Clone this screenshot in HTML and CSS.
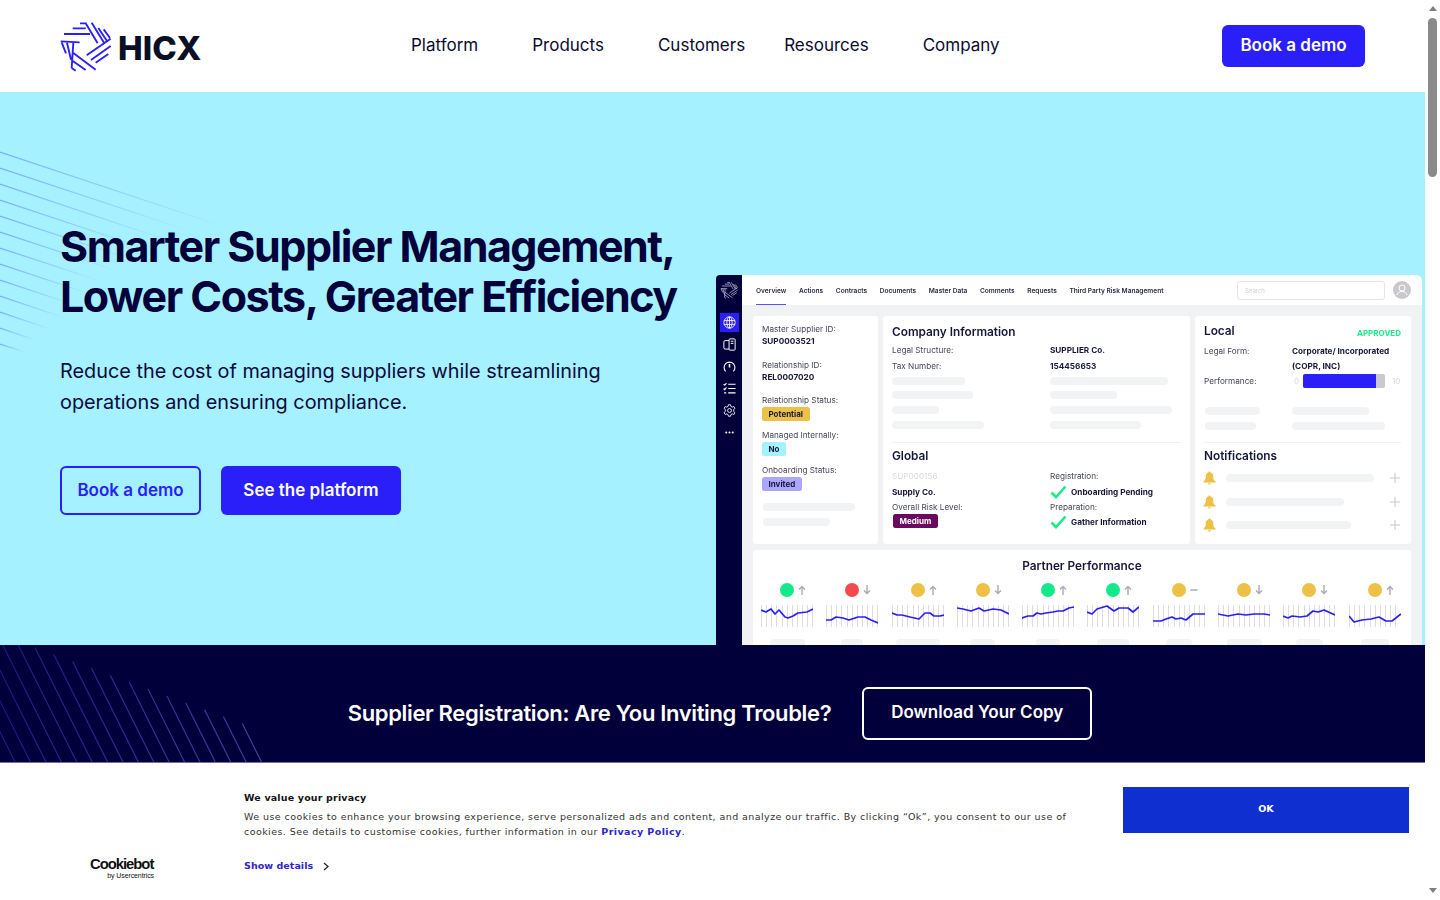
FILE: index.html
```html
<!DOCTYPE html>
<html lang="en">
<head>
    <meta charset="UTF-8">
    <meta name="viewport" content="width=device-width, initial-scale=1.0">
    <title>HICX - Smarter Supplier Management</title>
    <link rel="stylesheet" href="styles.css">
</head>
<body>
    <svg class="icon-defs" width="0" height="0">
        <defs>
            <symbol id="logo-mark" viewBox="0 0 180 168">
                <path fill="none" stroke="currentColor" stroke-width="5.6" d="M75 16H95M53 31H92M27 48H105M92 16L128 76M110 14L148 76M130 30L158 72M146 34L165 60M167 62L95 112M167 84L108 126M160 108L122 134M55 105L122 155M50 127L92 156M50 150L62 158M17 70L74 73M20 73L33 106M36 74L48 125M55 74L50 150"/>
            </symbol>
            <symbol id="arrow-up" viewBox="0 0 8 10">
                <path d="M4 10V1.5M1 4.5L4 1.5L7 4.5" fill="none" stroke="currentColor" stroke-width="1.4"/>
            </symbol>
            <symbol id="arrow-down" viewBox="0 0 8 10">
                <path d="M4 0V8.5M1 5.5L4 8.5L7 5.5" fill="none" stroke="currentColor" stroke-width="1.4"/>
            </symbol>
            <symbol id="arrow-flat" viewBox="0 0 8 10">
                <path d="M0.5 5H7.5" fill="none" stroke="currentColor" stroke-width="1.4"/>
            </symbol>
            <symbol id="check" viewBox="0 0 17 14">
                <path d="M1.5 7.5L6 12L15.5 1.5" fill="none" stroke="currentColor" stroke-width="2.6"/>
            </symbol>
            <symbol id="bell" viewBox="0 0 13 14">
                <path d="M6.5 0.5C7.2 0.5 7.6 1 7.6 1.6C9.5 2.2 10.3 3.8 10.3 6C10.3 8.2 11 9.4 12.5 10.6V11.4H0.5V10.6C2 9.4 2.7 8.2 2.7 6C2.7 3.8 3.5 2.2 5.4 1.6C5.4 1 5.8 0.5 6.5 0.5ZM5 12.2H8C8 13 7.3 13.6 6.5 13.6C5.7 13.6 5 13 5 12.2Z" fill="currentColor"/>
            </symbol>
            <symbol id="plus" viewBox="0 0 10 10">
                <path d="M5 0V10M0 5H10" fill="none" stroke="currentColor" stroke-width="1"/>
            </symbol>
        </defs>
    </svg>

    <div class="page">
        <header class="site-header">
            <a class="logo" href="#">
                <svg class="logo-mark"><use href="#logo-mark"/></svg>
                <span class="logo-text">HICX</span>
            </a>
            <nav class="main-nav">
                <a href="#">Platform</a>
                <a href="#">Products</a>
                <a class="nav-short" href="#">Customers</a>
                <a href="#">Resources</a>
                <a href="#">Company</a>
            </nav>
            <a class="btn btn-header" href="#">Book a demo</a>
        </header>

        <section class="hero">
            <svg class="hero-lines" width="300" height="260" viewBox="0 0 300 260">
                <defs>
                    <linearGradient id="hero-fade" gradientUnits="objectBoundingBox" x1="0" y1="0" x2="1" y2="0">
                        <stop offset="0" stop-color="#5f7de8" stop-opacity="0.6"/>
                        <stop offset="1" stop-color="#5f7de8" stop-opacity="0"/>
                    </linearGradient>
                </defs>
                <g fill="none" stroke="url(#hero-fade)" stroke-width="1.2">
                    <path d="M0 60L225 135"/>
                    <path d="M0 76L190 139"/>
                    <path d="M0 92L170 149"/>
                    <path d="M0 108L150 158"/>
                    <path d="M0 124L130 167"/>
                    <path d="M0 140L115 178"/>
                    <path d="M0 156L100 189"/>
                    <path d="M0 172L90 202"/>
                    <path d="M0 188L75 213"/>
                    <path d="M0 204L65 226"/>
                    <path d="M0 220L50 237"/>
                    <path d="M0 236L35 248"/>
                    <path d="M0 252L25 260"/>
                </g>
            </svg>

            <div class="hero-text">
                <h1>Smarter Supplier Management, Lower Costs, Greater Efficiency</h1>
                <p>Reduce the cost of managing suppliers while streamlining operations and ensuring compliance.</p>
                <div class="hero-actions">
                    <a class="btn btn-outline" href="#">Book a demo</a>
                    <a class="btn btn-solid" href="#">See the platform</a>
                </div>
            </div>

            <div class="mock">
                <aside class="mock-side">
                    <svg class="mock-logo"><use href="#logo-mark"/></svg>
                    <div class="side-icon side-active">
                        <svg viewBox="0 0 12 12" fill="none" stroke="currentColor" stroke-width="0.8"><circle cx="6" cy="6" r="5.2"/><ellipse cx="6" cy="6" rx="2.4" ry="5.2"/><path d="M1 4.2H11M1 7.8H11M6 0.8V11.2"/></svg>
                    </div>
                    <div class="side-icon">
                        <svg viewBox="0 0 12 12" fill="none" stroke="currentColor" stroke-width="0.9"><rect x="5.6" y="0.8" width="5.6" height="10.4" rx="0.8"/><path d="M5.6 2.4H2C1.2 2.4 0.8 2.8 0.8 3.6V9C0.8 9.8 1.2 10.2 2 10.2H5.6M7.2 3H9.6M7.2 5H9.6"/></svg>
                    </div>
                    <div class="side-icon">
                        <svg viewBox="0 0 12 12" fill="none" stroke="currentColor" stroke-width="1"><path d="M2.4 10.4A5 5 0 1 1 9.6 10.4"/><path d="M6 3.6V7" stroke-width="1.4"/></svg>
                    </div>
                    <div class="side-icon">
                        <svg viewBox="0 0 12 12" fill="none" stroke="currentColor" stroke-width="1"><path d="M4.8 2H11.6M4.8 6H11.6M4.8 10H11.6M0.6 2L1.6 3L3.2 1M0.6 6L1.6 7L3.2 5M1 10H3"/></svg>
                    </div>
                    <div class="side-icon">
                        <svg viewBox="0 0 12 12" fill="none" stroke="currentColor" stroke-width="0.8"><circle cx="6" cy="6" r="1.8"/><path d="M5 0.7H7L7.3 2.2L8.6 2.9L10 2.3L11 4L9.9 5V7L11 8L10 9.7L8.6 9.1L7.3 9.8L7 11.3H5L4.7 9.8L3.4 9.1L2 9.7L1 8L2.1 7V5L1 4L2 2.3L3.4 2.9L4.7 2.2Z"/></svg>
                    </div>
                    <div class="side-icon">
                        <svg viewBox="0 0 12 12" fill="currentColor"><circle cx="3" cy="6" r="0.9"/><circle cx="6" cy="6" r="0.9"/><circle cx="9" cy="6" r="0.9"/></svg>
                    </div>
                </aside>

                <div class="mock-main">
                    <div class="mock-top">
                        <div class="mock-tabs">
                            <span class="tab-active">Overview</span>
                            <span>Actions</span>
                            <span>Contracts</span>
                            <span>Documents</span>
                            <span>Master Data</span>
                            <span>Comments</span>
                            <span>Requests</span>
                            <span>Third Party Risk Management</span>
                        </div>
                        <div class="mock-search">Search</div>
                        <div class="mock-avatar">
                            <svg viewBox="0 0 18 18" fill="none" stroke="#fff" stroke-width="1"><circle cx="9" cy="7" r="3"/><path d="M4 14C4.5 11.5 6.5 10.5 9 10.5C11.5 10.5 13.5 11.5 14 14"/></svg>
                        </div>
                    </div>

                    <div class="mock-content">
                        <div class="card card-ids">
                            <div class="label">Master Supplier ID:</div>
                            <div class="value">SUP0003521</div>
                            <div class="label label-gap">Relationship ID:</div>
                            <div class="value">REL0007020</div>
                            <div class="label label-gap-sm">Relationship Status:</div>
                            <span class="badge badge-yellow">Potential</span>
                            <div class="label label-gap-xs">Managed Internally:</div>
                            <span class="badge badge-blue">No</span>
                            <div class="label label-gap-xs">Onboarding Status:</div>
                            <span class="badge badge-violet">Invited</span>
                            <div class="skeleton sk-ids-1"></div>
                            <div class="skeleton sk-ids-2"></div>
                        </div>

                        <div class="card card-company">
                            <h3>Company Information</h3>
                            <div class="info-grid">
                                <div class="label">Legal Structure:</div>
                                <div class="value">SUPPLIER Co.</div>
                                <div class="label">Tax Number:</div>
                                <div class="value">154456653</div>
                            </div>
                            <div class="skeleton-grid">
                                <div class="skeleton" style="width: 73px"></div>
                                <div class="skeleton" style="width: 118px"></div>
                                <div class="skeleton" style="width: 81px"></div>
                                <div class="skeleton" style="width: 67px"></div>
                                <div class="skeleton" style="width: 47px"></div>
                                <div class="skeleton" style="width: 122px"></div>
                                <div class="skeleton" style="width: 92px"></div>
                                <div class="skeleton" style="width: 91px"></div>
                            </div>
                            <div class="divider"></div>
                            <h3>Global</h3>
                            <div class="global-grid">
                                <div>
                                    <div class="label label-pale">SUP000156</div>
                                    <div class="value">Supply Co.</div>
                                    <div class="label">Overall Risk Level:</div>
                                    <span class="badge badge-purple">Medium</span>
                                </div>
                                <div>
                                    <div class="label">Registration:</div>
                                    <div class="value check-row"><svg class="check"><use href="#check"/></svg>Onboarding Pending</div>
                                    <div class="label">Preparation:</div>
                                    <div class="value check-row"><svg class="check"><use href="#check"/></svg>Gather Information</div>
                                </div>
                            </div>
                        </div>

                        <div class="card card-local">
                            <div class="local-head">
                                <h3>Local</h3>
                                <span class="approved">APPROVED</span>
                            </div>
                            <div class="local-grid">
                                <div class="label">Legal Form:</div>
                                <div class="value">Corporate/ Incorporated<br>(COPR, INC)</div>
                                <div class="label">Performance:</div>
                                <div class="perf">
                                    <span class="perf-end">0</span>
                                    <div class="perf-bar"><div class="perf-fill" style="width: 89%"></div></div>
                                    <span class="perf-end">10</span>
                                </div>
                            </div>
                            <div class="local-skeletons">
                                <div class="skeleton" style="width: 55px"></div>
                                <div class="skeleton" style="width: 77px"></div>
                                <div class="skeleton" style="width: 51px"></div>
                                <div class="skeleton" style="width: 93px"></div>
                            </div>
                            <div class="divider"></div>
                            <h3>Notifications</h3>
                            <div class="notes">
                                <div class="note"><svg class="bell"><use href="#bell"/></svg><div class="skeleton" style="width: 148px"></div><svg class="plus"><use href="#plus"/></svg></div>
                                <div class="note"><svg class="bell"><use href="#bell"/></svg><div class="skeleton" style="width: 118px"></div><svg class="plus"><use href="#plus"/></svg></div>
                                <div class="note"><svg class="bell"><use href="#bell"/></svg><div class="skeleton" style="width: 125px"></div><svg class="plus"><use href="#plus"/></svg></div>
                            </div>
                        </div>

                        <div class="card card-partner">
                            <h3>Partner Performance</h3>
                            <div class="partner-grid">
                                <div class="partner">
                                    <div class="partner-status"><i></i><span class="dot dot-green"></span><svg class="trend"><use href="#arrow-up"/></svg></div>
                                    <svg class="spark" viewBox="0 0 52 22"><polyline points="0,5 5,7 10,4 14,9 18,5 24,12 27,13 32,11 37,8 46,7 52,4"/></svg>
                                    <div class="skeleton" style="width: 35px"></div>
                                </div>
                                <div class="partner">
                                    <div class="partner-status"><i></i><span class="dot dot-red"></span><svg class="trend"><use href="#arrow-down"/></svg></div>
                                    <svg class="spark" viewBox="0 0 52 22"><polyline points="0,15 5,15 10,12 17,13 23,15 32,12 39,12 45,15 52,18"/></svg>
                                    <div class="skeleton" style="width: 22px"></div>
                                </div>
                                <div class="partner">
                                    <div class="partner-status"><i></i><span class="dot dot-yellow"></span><svg class="trend"><use href="#arrow-up"/></svg></div>
                                    <svg class="spark" viewBox="0 0 52 22"><polyline points="0,8 5,10 10,10 18,12 27,14 33,8 38,8 42,11 48,11 52,10"/></svg>
                                    <div class="skeleton" style="width: 44px"></div>
                                </div>
                                <div class="partner">
                                    <div class="partner-status"><i></i><span class="dot dot-yellow"></span><svg class="trend"><use href="#arrow-down"/></svg></div>
                                    <svg class="spark" viewBox="0 0 52 22"><polyline points="0,3 6,4 14,6 22,3 27,6 36,4 44,5 52,9"/></svg>
                                    <div class="skeleton" style="width: 25px"></div>
                                </div>
                                <div class="partner">
                                    <div class="partner-status"><i></i><span class="dot dot-green"></span><svg class="trend"><use href="#arrow-up"/></svg></div>
                                    <svg class="spark" viewBox="0 0 52 22"><polyline points="0,13 6,11 11,11 15,8 19,9 24,8 31,7 36,6 41,6 47,3 52,2"/></svg>
                                    <div class="skeleton" style="width: 24px"></div>
                                </div>
                                <div class="partner">
                                    <div class="partner-status"><i></i><span class="dot dot-green"></span><svg class="trend"><use href="#arrow-up"/></svg></div>
                                    <svg class="spark" viewBox="0 0 52 22"><polyline points="0,7 5,9 10,4 20,1 27,6 32,3 41,3 46,7 52,2"/></svg>
                                    <div class="skeleton" style="width: 32px"></div>
                                </div>
                                <div class="partner">
                                    <div class="partner-status"><i></i><span class="dot dot-yellow"></span><svg class="trend"><use href="#arrow-flat"/></svg></div>
                                    <svg class="spark" viewBox="0 0 52 22"><polyline points="0,16 8,16 13,14 19,12 23,14 28,13 33,15 40,9 52,9"/></svg>
                                    <div class="skeleton" style="width: 26px"></div>
                                </div>
                                <div class="partner">
                                    <div class="partner-status"><i></i><span class="dot dot-yellow"></span><svg class="trend"><use href="#arrow-down"/></svg></div>
                                    <svg class="spark" viewBox="0 0 52 22"><polyline points="0,9 10,11 20,9 28,10 36,9 46,9 52,10"/></svg>
                                    <div class="skeleton" style="width: 35px"></div>
                                </div>
                                <div class="partner">
                                    <div class="partner-status"><i></i><span class="dot dot-yellow"></span><svg class="trend"><use href="#arrow-down"/></svg></div>
                                    <svg class="spark" viewBox="0 0 52 22"><polyline points="0,11 5,13 9,11 17,12 24,11 30,6 35,7 41,5 52,10"/></svg>
                                    <div class="skeleton" style="width: 27px"></div>
                                </div>
                                <div class="partner">
                                    <div class="partner-status"><i></i><span class="dot dot-yellow"></span><svg class="trend"><use href="#arrow-up"/></svg></div>
                                    <svg class="spark" viewBox="0 0 52 22"><polyline points="0,11 5,17 13,15 22,14 30,12 37,16 43,16 52,9"/></svg>
                                    <div class="skeleton" style="width: 28px"></div>
                                </div>
                            </div>
                        </div>
                    </div>
                </div>
            </div>
        </section>

        <section class="banner">
            <svg class="banner-lines" width="280" height="118" viewBox="0 0 280 118">
                <defs>
                    <linearGradient id="banner-fade" gradientUnits="userSpaceOnUse" x1="0" y1="0" x2="262" y2="0">
                        <stop offset="0" stop-color="#1b1988"/>
                        <stop offset="1" stop-color="#45449f"/>
                    </linearGradient>
                </defs>
                <path fill="none" stroke="url(#banner-fade)" stroke-width="1.1" d="M242.3 78.5L262 118M223.4 71.6L246.6 118M204.6 64.7L231.2 118M185.7 57.8L215.8 118M166.9 50.9L200.4 118M148 44L185 118M129.2 37.1L169.6 118M110.3 30.2L154.2 118M91.5 23.3L138.8 118M72.6 16.4L123.4 118M53.8 9.5L108 118M34.9 2.6L92.6 118M18.2 0L77.2 118M2.8 0L61.8 118M-12.6 0L46.4 118M-28 0L31 118M-43.4 0L15.6 118"/>
            </svg>
            <h2>Supplier Registration: Are You Inviting Trouble?</h2>
            <a class="btn btn-ghost" href="#">Download Your Copy</a>
        </section>

        <section class="cookie">
            <div class="cookie-brand">
                <span class="cookie-name">Cookiebot</span>
                <span class="cookie-by">by Usercentrics</span>
            </div>
            <div class="cookie-text">
                <h4>We value your privacy</h4>
                <p>We use cookies to enhance your browsing experience, serve personalized ads and content, and analyze our traffic. By clicking “Ok”, you consent to our use of cookies. See details to customise cookies, further information in our <a href="#">Privacy Policy</a>.</p>
                <a class="cookie-details" href="#">Show details
                    <svg width="6" height="9" viewBox="0 0 6 9" fill="none" stroke="#222" stroke-width="1.2"><path d="M1 1L5 4.5L1 8"/></svg>
                </a>
            </div>
            <button class="cookie-ok">OK</button>
        </section>
    </div>

    <div class="scrollbar">
        <span class="scroll-up"></span>
        <span class="scroll-thumb"></span>
        <span class="scroll-down"></span>
    </div>
</body>
</html>
```

FILE: styles.css
```css
* {
    box-sizing: border-box;
}
body {
    margin: 0;
    height: 900px;
    display: flex;
    overflow: hidden;
    font-family: Inter, "Liberation Sans", sans-serif;
    color: #03003a;
    background: #fff;
}
a {
    text-decoration: none;
    color: inherit;
}
h1, h2, h3, h4, p {
    margin: 0;
}
.icon-defs {
    position: absolute;
}
.page {
    width: 1425px;
    flex: none;
    display: flex;
    flex-direction: column;
}

/* header */
.site-header {
    height: 92px;
    flex: none;
    display: flex;
    align-items: center;
    padding: 0 60px;
    background: #fff;
}
.logo {
    display: flex;
    align-items: center;
    width: 351px;
}
.logo-mark {
    width: 60px;
    height: 56px;
    color: #2a1ff5;
    margin-left: -5px;
    margin-right: 3px;
}
.logo-text {
    font-size: 33px;
    font-weight: 800;
    letter-spacing: 0.1px;
    color: #0b0f26;
    margin-top: 3px;
}
.main-nav {
    display: flex;
    margin-top: -3px;
    font-size: 17px;
    color: #0b0b30;
}
.main-nav a {
    margin-right: 54px;
}
.main-nav .nav-short {
    margin-right: 39px;
}
.btn {
    display: flex;
    align-items: center;
    justify-content: center;
    border-radius: 6px;
    font-size: 17px;
    font-weight: 600;
}
.btn-header {
    width: 143px;
    height: 42px;
    margin-left: auto;
    background: #2a1ff8;
    color: #fff;
    padding-bottom: 3px;
}

/* hero */
.hero {
    position: relative;
    height: 553px;
    flex: none;
    display: flex;
    align-items: flex-start;
    overflow: hidden;
    padding: 129px 0 0 60px;
    background: #a5f1ff;
}
.hero-lines {
    position: absolute;
    left: 0;
    top: 0;
}
.hero-text {
    position: relative;
    width: 656px;
    flex: none;
}
.hero-text h1 {
    font-size: 43px;
    line-height: 50px;
    font-weight: 700;
    letter-spacing: -1.5px;
}
.hero-text p {
    width: 560px;
    margin-top: 34.5px;
    font-size: 19.85px;
    line-height: 31px;
    color: #0a0a3c;
}
.hero-actions {
    display: flex;
    gap: 20px;
    margin-top: 48.5px;
}
.btn-outline {
    width: 141px;
    height: 49px;
    padding-bottom: 1px;
    border: 2px solid #2a1ff8;
    color: #2a1ff8;
}
.btn-solid {
    width: 180px;
    height: 49px;
    padding-bottom: 1px;
    background: #2a1ff8;
    color: #fff;
}

/* product mock */
.mock {
    width: 706px;
    height: 380px;
    flex: none;
    margin-top: 54px;
    display: flex;
    border-radius: 4px 6px 0 0;
    overflow: hidden;
    background: #f1f2f4;
    font-size: 8.2px;
    filter: blur(0.25px);
}
.mock-side {
    width: 26px;
    flex: none;
    display: flex;
    flex-direction: column;
    align-items: center;
    padding-top: 5px;
    background: #02003a;
    color: #fff;
}
.mock-logo {
    width: 20px;
    height: 20px;
    margin-bottom: 13px;
    color: #e8e8f0;
}
.side-icon {
    width: 19px;
    height: 19px;
    margin-bottom: 3px;
    display: flex;
    align-items: center;
    justify-content: center;
}
.side-icon svg {
    width: 13px;
    height: 13px;
}
.side-active {
    background: #2a1ff8;
}
.mock-main {
    flex: 1;
    min-width: 0;
    display: flex;
    flex-direction: column;
}
.mock-top {
    height: 30px;
    flex: none;
    display: flex;
    align-items: center;
    padding-left: 14px;
    background: #fff;
}
.mock-tabs {
    display: flex;
    gap: 12.6px;
    align-self: stretch;
    font-size: 6.6px;
    font-weight: 600;
    line-height: 32px;
    color: #2a2a45;
}
.tab-active {
    border-bottom: 1px solid #5e50e8;
}
.mock-search {
    width: 148px;
    height: 19px;
    margin-left: auto;
    padding-left: 7px;
    border: 1px solid #e4e5e8;
    border-radius: 3px;
    font-size: 6px;
    line-height: 17px;
    color: #cfd0d6;
}
.mock-avatar {
    width: 18px;
    height: 18px;
    margin: 0 11px 0 8px;
    border-radius: 50%;
    background: #c9c9cd;
}
.mock-avatar svg {
    display: block;
}
.mock-content {
    display: grid;
    grid-template-columns: 125px 307px 216px;
    grid-template-rows: 228px auto;
    column-gap: 5px;
    row-gap: 6px;
    padding: 11px 0 0 11px;
}
.card {
    background: #fff;
    border-radius: 3px;
}
.card h3 {
    font-size: 11.8px;
    line-height: 16px;
    font-weight: 600;
    color: #16163a;
}
.label {
    line-height: 12px;
    color: #45465a;
    white-space: nowrap;
}
.label-pale {
    color: #d8d9de;
}
.value {
    line-height: 12px;
    font-weight: 700;
    color: #16163a;
    white-space: nowrap;
}
.badge {
    display: table;
    height: 14px;
    padding: 0 6.5px;
    border-radius: 2.5px;
    font-size: 8px;
    font-weight: 700;
    line-height: 14px;
    color: #16163a;
}
.badge-yellow {
    background: #edc145;
}
.badge-blue {
    background: #a5f1ff;
}
.badge-violet {
    background: #ada7fb;
}
.badge-purple {
    background: #6a0a5e;
    color: #fff;
}
.skeleton {
    height: 8px;
    border-radius: 4px;
    background: #f2f3f5;
}
.divider {
    height: 1px;
    background: #eff0f2;
}

/* left card */
.card-ids {
    padding: 7px 0 0 9px;
}
.label-gap {
    margin-top: 12px;
}
.label-gap-sm {
    margin-top: 11px;
}
.label-gap-xs {
    margin: 7.5px 0 1px;
}
.card-ids .badge {
    margin-top: 1.4px;
}
.sk-ids-1 {
    width: 92px;
    margin: 11.5px 0 0 1px;
}
.sk-ids-2 {
    width: 67px;
    margin: 7px 0 0 1px;
}

/* company card */
.card-company {
    padding: 8px 9px 0;
}
.info-grid {
    display: grid;
    grid-template-columns: 158px 1fr;
    row-gap: 3.5px;
    margin-top: 4px;
}
.skeleton-grid {
    display: grid;
    grid-template-columns: 158px 1fr;
    row-gap: 6.7px;
    margin-top: 5px;
}
.card-company .divider {
    margin: 13.5px 0 4.5px;
}
.global-grid {
    display: grid;
    grid-template-columns: 158px 1fr;
    margin-top: 6px;
}
.global-grid .label {
    margin-bottom: 4px;
}
.global-grid .value {
    margin-bottom: 3px;
}
.global-grid .label:nth-child(3) {
    margin-bottom: 3px;
}
.global-grid .badge {
    margin: -1.5px 0 0 1px;
}
.check-row {
    display: flex;
    align-items: center;
    height: 12px;
}
.check {
    width: 17px;
    height: 14px;
    margin-right: 4px;
    color: #1de98b;
}

/* local card */
.card-local {
    padding: 7px 10px 0 9px;
}
.local-head {
    display: flex;
    align-items: center;
    justify-content: space-between;
}
.approved {
    margin-top: 3px;
    font-size: 8px;
    font-weight: 700;
    color: #1de98b;
}
.local-grid {
    display: grid;
    grid-template-columns: 88px 1fr;
    row-gap: 0.5px;
    margin-top: 4.5px;
}
.local-grid .value {
    line-height: 15px;
}
.local-grid .label {
    line-height: 15px;
}
.local-grid .label:nth-child(3) {
    line-height: 14px;
}
.perf {
    display: flex;
    align-items: center;
    height: 14px;
    color: #d8d9de;
}
.perf-end {
    width: 11px;
    padding-left: 2px;
}
.perf-end:last-child {
    margin-left: 7px;
    width: auto;
    padding: 0;
}
.perf-bar {
    width: 82px;
    height: 14px;
    border-radius: 2px;
    overflow: hidden;
    background: #c9cad0;
}
.perf-fill {
    height: 100%;
    background: #2a1ff8;
}
.local-skeletons {
    display: grid;
    grid-template-columns: 87px 1fr;
    row-gap: 6.5px;
    margin: 19px 0 0 1px;
}
.card-local .divider {
    margin: 12.5px 0 4.5px;
}
.notes {
    display: flex;
    flex-direction: column;
    gap: 9.5px;
    margin-top: 7.5px;
}
.note {
    display: flex;
    align-items: center;
    height: 14px;
}
.bell {
    width: 13px;
    height: 14px;
    margin: 0 10px 0 -1px;
    color: #edc145;
}
.plus {
    width: 10px;
    height: 10px;
    margin-left: auto;
    margin-right: 1px;
    color: #c6c7cc;
}

/* partner card */
.card-partner {
    grid-column: 1 / 4;
    padding: 8px 10px 20px 8px;
}
.card-partner h3 {
    padding-left: 2px;
    text-align: center;
}
.partner-grid {
    display: grid;
    grid-template-columns: repeat(10, 52px);
    column-gap: 13.3px;
    margin-top: 9px;
}
.partner {
    display: flex;
    flex-direction: column;
    align-items: center;
}
.partner-status {
    display: grid;
    grid-template-columns: 1fr 14px 1fr;
    align-items: center;
    width: 100%;
    height: 14px;
}
.dot {
    width: 14px;
    height: 14px;
    border-radius: 50%;
}
.dot-green {
    background: #12e98a;
}
.dot-red {
    background: #f5484f;
}
.dot-yellow {
    background: #edc145;
}
.trend {
    width: 8px;
    height: 10px;
    margin-left: 4px;
    color: #a9abb8;
}
.spark {
    width: 52px;
    height: 22px;
    margin: 8px 0 12px;
    background: repeating-linear-gradient(90deg, #dcdde0 0 1px, transparent 1px 5.15px);
}
.spark polyline {
    fill: none;
    stroke: #2a1ff8;
    stroke-width: 1.7;
    stroke-linejoin: round;
}

/* banner */
.banner {
    position: relative;
    height: 118px;
    flex: none;
    display: flex;
    align-items: center;
    justify-content: center;
    gap: 31px;
    padding: 18px 0 0 15px;
    overflow: hidden;
    background: #02003a;
}
.banner-lines {
    position: absolute;
    left: 0;
    top: 0;
}
.banner h2 {
    position: relative;
    font-size: 22px;
    font-weight: 600;
    letter-spacing: -0.35px;
    color: #fff;
}
.btn-ghost {
    position: relative;
    width: 230px;
    height: 53px;
    border: 2px solid #fff;
    color: #fff;
    padding-bottom: 3px;
}

/* cookie bar */
.cookie {
    position: relative;
    flex: 1;
    display: flex;
    border-top: 1px solid #70709a;
    margin-top: -1px;
    background: #fff;
    font-family: "DejaVu Sans", sans-serif;
}
.cookie-brand {
    width: 244px;
    flex: none;
    padding: 94px 0 0 90px;
    font-family: "Liberation Sans", sans-serif;
    color: #111;
}
.cookie-name {
    display: block;
    width: 64px;
    font-size: 14.8px;
    line-height: 14px;
    font-weight: 700;
    letter-spacing: -1px;
}
.cookie-by {
    display: block;
    width: 64px;
    margin-top: 1px;
    font-size: 7px;
    line-height: 8px;
    text-align: right;
    letter-spacing: -0.1px;
}
.cookie-text {
    width: 879px;
    flex: none;
    padding-top: 29px;
    font-size: 9.5px;
    line-height: 15px;
    letter-spacing: 0.43px;
    color: #333;
}
.cookie-text h4 {
    font-size: 9.5px;
    font-weight: 700;
    line-height: 12px;
    letter-spacing: 0.17px;
    color: #141414;
}
.cookie-text p {
    width: 830px;
    margin-top: 5px;
}
.cookie-text a {
    font-weight: 700;
    color: #2e25c8;
}
.cookie-details {
    display: block;
    margin-top: 19px;
    letter-spacing: 0.05px;
}
.cookie-details svg {
    margin-left: 6px;
    vertical-align: -2px;
}
.cookie-ok {
    width: 286px;
    height: 46px;
    margin-top: 24px;
    padding-bottom: 4px;
    border: none;
    background: #0f2fd0;
    color: #fff;
    font-family: "DejaVu Sans", sans-serif;
    font-size: 9.5px;
    font-weight: 700;
}

/* scrollbar */
.scrollbar {
    width: 15px;
    flex: none;
    display: flex;
    flex-direction: column;
    align-items: center;
    padding-top: 6px;
    background: #fff;
}
.scroll-up {
    width: 0;
    height: 0;
    border-left: 4px solid transparent;
    border-right: 4px solid transparent;
    border-bottom: 5px solid #7e7e7e;
}
.scroll-thumb {
    width: 9px;
    height: 159px;
    margin-top: 7px;
    border-radius: 5px;
    background: #8a8a8a;
}
.scroll-down {
    width: 0;
    height: 0;
    margin-top: auto;
    margin-bottom: 7px;
    border-left: 4px solid transparent;
    border-right: 4px solid transparent;
    border-top: 5px solid #7e7e7e;
}
```
